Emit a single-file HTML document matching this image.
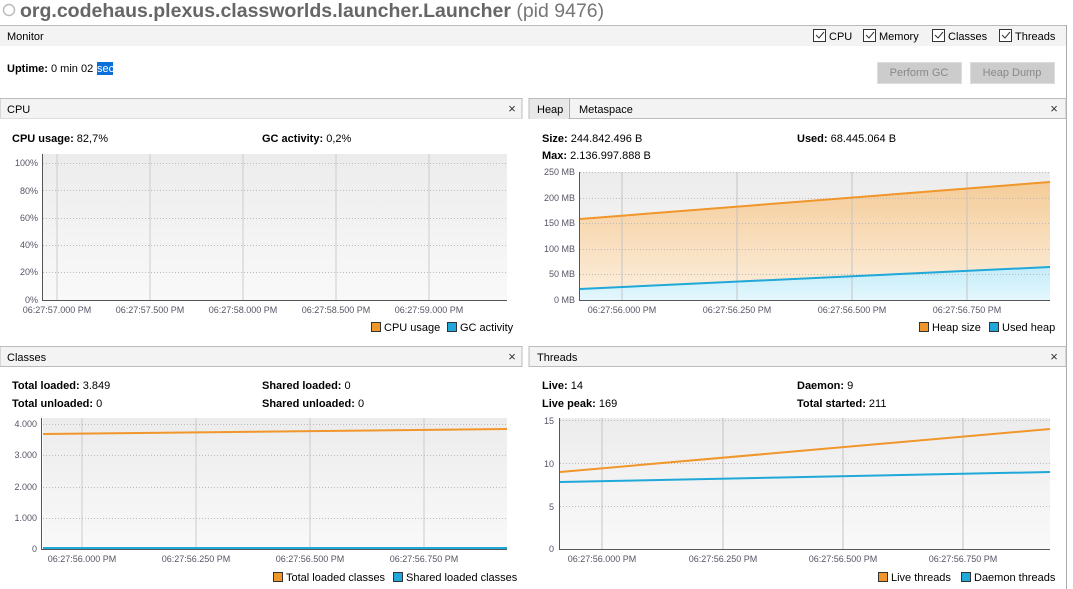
<!DOCTYPE html>
<html><head><meta charset="utf-8"><style>
html,body{margin:0;padding:0;background:#fff;width:1073px;height:589px;overflow:hidden}
svg{display:block;font-family:"Liberation Sans",sans-serif}
</style></head><body>
<svg width="1073" height="589" viewBox="0 0 1073 589" xmlns="http://www.w3.org/2000/svg">
<defs>
<linearGradient id="pg" x1="0" y1="0" x2="0" y2="1"><stop offset="0" stop-color="#ececec"/><stop offset="1" stop-color="#f9f9f9"/></linearGradient>
<linearGradient id="og" x1="0" y1="0" x2="0" y2="1"><stop offset="0" stop-color="#f4cc99"/><stop offset="1" stop-color="#fdf0e0"/></linearGradient>
<linearGradient id="bg" x1="0" y1="0" x2="0" y2="1"><stop offset="0" stop-color="#c4ecf9"/><stop offset="1" stop-color="#e4f7fd"/></linearGradient>
</defs>
<rect width="1073" height="589" fill="#fff"/>
<!-- title -->
<circle cx="9" cy="10" r="5.5" fill="none" stroke="#bbb" stroke-width="1.5"/>
<text x="20" y="17" font-size="19.5" font-weight="bold" fill="#666">org.codehaus.plexus.classworlds.launcher.Launcher <tspan font-weight="normal" fill="#777">(pid 9476)</tspan></text>
<line x1="0" y1="25.5" x2="1066" y2="25.5" stroke="#bbb"/>
<line x1="1066.5" y1="25" x2="1066.5" y2="589" stroke="#aaa"/>
<rect x="0" y="26" width="1066" height="20" fill="#f3f3f3"/>
<text x="7" y="40" font-size="11" fill="#000">Monitor</text>
<g font-size="11" fill="#000">
<rect x="813.5" y="29.5" width="12" height="12" fill="#fff" stroke="#333"/><path d="M816 35l3 3 5-6" fill="none" stroke="#333"/><text x="829" y="40">CPU</text>
<rect x="863.5" y="29.5" width="12" height="12" fill="#fff" stroke="#333"/><path d="M866 35l3 3 5-6" fill="none" stroke="#333"/><text x="879" y="40">Memory</text>
<rect x="932.5" y="29.5" width="12" height="12" fill="#fff" stroke="#333"/><path d="M935 35l3 3 5-6" fill="none" stroke="#333"/><text x="948" y="40">Classes</text>
<rect x="999.5" y="29.5" width="12" height="12" fill="#fff" stroke="#333"/><path d="M1002 35l3 3 5-6" fill="none" stroke="#333"/><text x="1015" y="40">Threads</text>
</g>
<text x="7" y="72" font-size="11"><tspan font-weight="bold">Uptime:</tspan> 0 min 02 </text>
<rect x="97" y="62" width="16" height="13" fill="#0a6fd8"/><text x="97" y="72" font-size="11" fill="#fff">sec</text>
<rect x="877.5" y="62.5" width="84" height="21" fill="#ccc" stroke="#ddd"/><text x="919" y="76" font-size="11" fill="#888" text-anchor="middle">Perform GC</text>
<rect x="970.5" y="62.5" width="84" height="21" fill="#ccc" stroke="#ddd"/><text x="1012" y="76" font-size="11" fill="#888" text-anchor="middle">Heap Dump</text>

<!-- CPU panel -->
<rect x="0" y="98.5" width="522" height="20" fill="#f3f3f3" stroke="#bbb"/>
<text x="7" y="113" font-size="11">CPU</text><text x="512" y="113" font-size="13" text-anchor="middle" fill="#333">×</text>
<line x1="0" y1="119" x2="522" y2="119" stroke="#fff"/>
<text x="12" y="142" font-size="11"><tspan font-weight="bold">CPU usage:</tspan> 82,7%</text>
<text x="262" y="142" font-size="11"><tspan font-weight="bold">GC activity:</tspan> 0,2%</text>
<rect x="43" y="154" width="464" height="146" fill="url(#pg)"/>
<g stroke="#ccc"><line x1="57" y1="154" x2="57" y2="300"/><line x1="150" y1="154" x2="150" y2="300"/><line x1="243" y1="154" x2="243" y2="300"/><line x1="336" y1="154" x2="336" y2="300"/><line x1="429" y1="154" x2="429" y2="300"/></g>
<g stroke="#bbb" stroke-dasharray="1 2"><line x1="43" y1="163.5" x2="507" y2="163.5"/><line x1="43" y1="190.5" x2="507" y2="190.5"/><line x1="43" y1="218.5" x2="507" y2="218.5"/><line x1="43" y1="245.5" x2="507" y2="245.5"/><line x1="43" y1="272.5" x2="507" y2="272.5"/></g>
<path d="M42.5 154V300.5H507" fill="none" stroke="#555"/>
<g font-size="9" fill="#556" text-anchor="end"><text x="38" y="166">100%</text><text x="38" y="194">80%</text><text x="38" y="221">60%</text><text x="38" y="248">40%</text><text x="38" y="275">20%</text><text x="38" y="303">0%</text></g>
<g font-size="9" fill="#556" text-anchor="middle"><text x="57" y="313">06:27:57.000 PM</text><text x="150" y="313">06:27:57.500 PM</text><text x="243" y="313">06:27:58.000 PM</text><text x="336" y="313">06:27:58.500 PM</text><text x="429" y="313">06:27:59.000 PM</text></g>
<g font-size="11"><rect x="371.5" y="322.5" width="9" height="9" fill="#f0962a" stroke="#333"/><text x="384" y="331">CPU usage</text><rect x="447.5" y="322.5" width="9" height="9" fill="#1fa8d8" stroke="#333"/><text x="460" y="331">GC activity</text></g>

<!-- Heap panel -->
<rect x="529" y="98.5" width="537" height="20" fill="#f3f3f3" stroke="#bbb"/>
<rect x="529.5" y="99" width="39" height="20" fill="#e8e8e8"/><line x1="569.5" y1="99" x2="569.5" y2="119" stroke="#aaa"/>
<text x="537" y="113" font-size="11">Heap</text><text x="579" y="113" font-size="11">Metaspace</text><text x="1054" y="113" font-size="13" text-anchor="middle" fill="#333">×</text>
<text x="542" y="142" font-size="11"><tspan font-weight="bold">Size:</tspan> 244.842.496 B</text>
<text x="797" y="142" font-size="11"><tspan font-weight="bold">Used:</tspan> 68.445.064 B</text>
<text x="542" y="159" font-size="11"><tspan font-weight="bold">Max:</tspan> 2.136.997.888 B</text>
<rect x="580" y="172" width="470" height="128" fill="url(#pg)"/>
<path d="M580 219L1050 182V300H580Z" fill="url(#og)"/>
<path d="M580 289L1050 267V300H580Z" fill="url(#bg)"/>
<g stroke="#c4c4c4"><line x1="622" y1="172" x2="622" y2="300"/><line x1="737" y1="172" x2="737" y2="300"/><line x1="852" y1="172" x2="852" y2="300"/><line x1="967" y1="172" x2="967" y2="300"/></g>
<g stroke="#bbb" stroke-dasharray="1 2"><line x1="580" y1="172.5" x2="1050" y2="172.5"/><line x1="580" y1="198.5" x2="1050" y2="198.5"/><line x1="580" y1="223.5" x2="1050" y2="223.5"/><line x1="580" y1="249.5" x2="1050" y2="249.5"/><line x1="580" y1="274.5" x2="1050" y2="274.5"/></g>
<line x1="580" y1="219" x2="1050" y2="182" stroke="#f0962a" stroke-width="2"/>
<line x1="580" y1="289" x2="1050" y2="267" stroke="#1fa8d8" stroke-width="2"/>
<path d="M579.5 172V300.5H1050" fill="none" stroke="#555"/>
<g font-size="9" fill="#556" text-anchor="end"><text x="575" y="175">250 MB</text><text x="575" y="201">200 MB</text><text x="575" y="226">150 MB</text><text x="575" y="252">100 MB</text><text x="575" y="277">50 MB</text><text x="575" y="303">0 MB</text></g>
<g font-size="9" fill="#556" text-anchor="middle"><text x="622" y="313">06:27:56.000 PM</text><text x="737" y="313">06:27:56.250 PM</text><text x="852" y="313">06:27:56.500 PM</text><text x="967" y="313">06:27:56.750 PM</text></g>
<g font-size="11"><rect x="919.5" y="322.5" width="9" height="9" fill="#f0962a" stroke="#333"/><text x="932" y="331">Heap size</text><rect x="989.5" y="322.5" width="9" height="9" fill="#1fa8d8" stroke="#333"/><text x="1002" y="331">Used heap</text></g>

<!-- Classes -->
<rect x="0" y="346.5" width="522" height="20" fill="#f3f3f3" stroke="#bbb"/>
<text x="7" y="361" font-size="11">Classes</text><text x="512" y="361" font-size="13" text-anchor="middle" fill="#333">×</text>
<text x="12" y="389" font-size="11"><tspan font-weight="bold">Total loaded:</tspan> 3.849</text>
<text x="262" y="389" font-size="11"><tspan font-weight="bold">Shared loaded:</tspan> 0</text>
<text x="12" y="407" font-size="11"><tspan font-weight="bold">Total unloaded:</tspan> 0</text>
<text x="262" y="407" font-size="11"><tspan font-weight="bold">Shared unloaded:</tspan> 0</text>
<rect x="43" y="418" width="464" height="131" fill="url(#pg)"/>
<g stroke="#ccc"><line x1="82" y1="418" x2="82" y2="549"/><line x1="196" y1="418" x2="196" y2="549"/><line x1="310" y1="418" x2="310" y2="549"/><line x1="424" y1="418" x2="424" y2="549"/></g>
<g stroke="#bbb" stroke-dasharray="1 2"><line x1="43" y1="424.5" x2="507" y2="424.5"/><line x1="43" y1="455.5" x2="507" y2="455.5"/><line x1="43" y1="487.5" x2="507" y2="487.5"/><line x1="43" y1="518.5" x2="507" y2="518.5"/></g>
<line x1="43" y1="434" x2="507" y2="429" stroke="#f0962a" stroke-width="2"/>
<line x1="43" y1="548" x2="507" y2="548" stroke="#1fa8d8" stroke-width="2"/>
<path d="M41.5 418V549.5H507" fill="none" stroke="#555"/>
<g font-size="9" fill="#556" text-anchor="end"><text x="37" y="427">4.000</text><text x="37" y="458">3.000</text><text x="37" y="490">2.000</text><text x="37" y="521">1.000</text><text x="37" y="552">0</text></g>
<g font-size="9" fill="#556" text-anchor="middle"><text x="82" y="562">06:27:56.000 PM</text><text x="196" y="562">06:27:56.250 PM</text><text x="310" y="562">06:27:56.500 PM</text><text x="424" y="562">06:27:56.750 PM</text></g>
<g font-size="11"><rect x="273.5" y="572.5" width="9" height="9" fill="#f0962a" stroke="#333"/><text x="286" y="581">Total loaded classes</text><rect x="393.5" y="572.5" width="9" height="9" fill="#1fa8d8" stroke="#333"/><text x="406" y="581">Shared loaded classes</text></g>

<!-- Threads -->
<rect x="529" y="346.5" width="537" height="20" fill="#f3f3f3" stroke="#bbb"/>
<text x="537" y="361" font-size="11">Threads</text><text x="1054" y="361" font-size="13" text-anchor="middle" fill="#333">×</text>
<text x="542" y="389" font-size="11"><tspan font-weight="bold">Live:</tspan> 14</text>
<text x="797" y="389" font-size="11"><tspan font-weight="bold">Daemon:</tspan> 9</text>
<text x="542" y="407" font-size="11"><tspan font-weight="bold">Live peak:</tspan> 169</text>
<text x="797" y="407" font-size="11"><tspan font-weight="bold">Total started:</tspan> 211</text>
<rect x="560" y="418" width="490" height="131" fill="url(#pg)"/>
<g stroke="#c4c4c4"><line x1="602" y1="418" x2="602" y2="549"/><line x1="723" y1="418" x2="723" y2="549"/><line x1="843" y1="418" x2="843" y2="549"/><line x1="963" y1="418" x2="963" y2="549"/></g>
<g stroke="#bbb" stroke-dasharray="1 2"><line x1="560" y1="420.5" x2="1050" y2="420.5"/><line x1="560" y1="463.5" x2="1050" y2="463.5"/><line x1="560" y1="506.5" x2="1050" y2="506.5"/></g>
<line x1="560" y1="472" x2="1050" y2="429" stroke="#f0962a" stroke-width="2"/>
<line x1="560" y1="482" x2="1050" y2="472" stroke="#1fa8d8" stroke-width="2"/>
<path d="M559.5 418V549.5H1050" fill="none" stroke="#555"/>
<g font-size="9" fill="#556" text-anchor="end"><text x="554" y="424">15</text><text x="554" y="467">10</text><text x="554" y="510">5</text><text x="554" y="552">0</text></g>
<g font-size="9" fill="#556" text-anchor="middle"><text x="602" y="562">06:27:56.000 PM</text><text x="723" y="562">06:27:56.250 PM</text><text x="843" y="562">06:27:56.500 PM</text><text x="963" y="562">06:27:56.750 PM</text></g>
<g font-size="11"><rect x="878.5" y="572.5" width="9" height="9" fill="#f0962a" stroke="#333"/><text x="891" y="581">Live threads</text><rect x="961.5" y="572.5" width="9" height="9" fill="#1fa8d8" stroke="#333"/><text x="974" y="581">Daemon threads</text></g>
</svg>
</body></html>
